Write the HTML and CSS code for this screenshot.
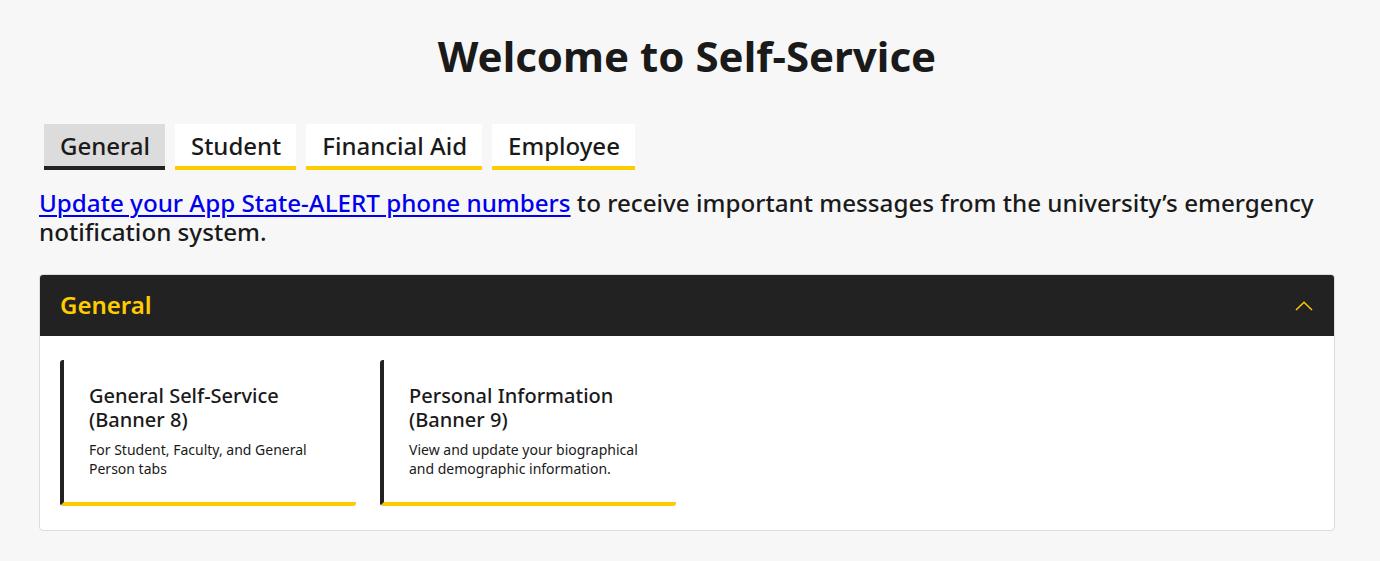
FILE: index.html
```html
<!DOCTYPE html>
<html lang="en">
<head>
<meta charset="utf-8">
<title>Welcome to Self-Service</title>
<link rel="stylesheet" href="styles.css">
</head>
<body>
<main class="page">
  <h1 class="title">Welcome to Self-Service</h1>
  <nav class="tabs">
    <a class="tab tab-active" href="#">General</a>
    <a class="tab" href="#">Student</a>
    <a class="tab" href="#">Financial Aid</a>
    <a class="tab" href="#">Employee</a>
  </nav>
  <p class="notice"><a href="#" class="notice-link">Update your App State-ALERT phone numbers</a> to receive important messages from the university’s emergency notification system.</p>
  <section class="panel">
    <header class="panel-head">
      <h2 class="panel-title">General</h2>
      <svg class="chevron" width="18" height="10" viewBox="0 0 18 10" aria-hidden="true"><path d="M1 9 L9 1.2 L17 9" fill="none" stroke="#ffcc00" stroke-width="1.5"/></svg>
    </header>
    <div class="panel-body">
      <a class="card" href="#">
        <h3 class="card-title">General Self-Service (Banner 8)</h3>
        <p class="card-desc">For Student, Faculty, and General Person tabs</p>
      </a>
      <a class="card" href="#">
        <h3 class="card-title">Personal Information (Banner 9)</h3>
        <p class="card-desc">View and update your biographical and demographic information.</p>
      </a>
    </div>
  </section>
</main>
</body>
</html>
```
FILE: styles.css
```css
html, body {
  margin: 0;
  padding: 0;
  background: #f7f7f7;
  color: #1a1a1a;
  font-family: "Noto Sans", "Open Sans", sans-serif;
}
.page {
  width: 1296px;
  margin: 0 0 0 39px;
  padding-top: 28px;
}
.title {
  margin: 0;
  text-align: center;
  font-size: 42px;
  line-height: 56px;
  font-weight: 700;
  color: #1a1a1a;
}
.tabs {
  display: flex;
  gap: 10px;
  margin: 40px 0 0 5px;
}
.tab {
  display: block;
  background: #fff;
  color: #1a1a1a;
  text-decoration: none;
  font-size: 24px;
  font-weight: 500;
  line-height: 41px;
  padding: 1px 15px 0 16px;
  border-bottom: 4px solid #ffcc00;
}
.tab-active {
  background: #dcdcdc;
  border-bottom-color: #222;
}
.notice {
  margin: 18px 0 0 0;
  font-size: 24.2px;
  line-height: 29px;
  font-weight: 500;
  color: #1a1a1a;
}
.notice-link {
  color: #0000ee;
  text-decoration: underline;
  text-underline-offset: 3px;
  text-decoration-thickness: 2px;
}
.panel {
  margin-top: 28px;
  background: #fff;
  border: 1px solid #dcdcdc;
  border-radius: 4px;
}
.panel-head {
  display: flex;
  align-items: center;
  justify-content: space-between;
  background: #222;
  height: 61px;
  padding: 0 21px 0 20px;
  border-radius: 3px 3px 0 0;
}
.panel-title {
  margin: 0 0 3px 0;
  color: #ffcc00;
  font-size: 24px;
  font-weight: 600;
}
.chevron {
  display: block;
}
.panel-body {
  display: flex;
  gap: 24px;
  padding: 24px 20px 24px 20px;
}
.card {
  display: block;
  box-sizing: border-box;
  width: 296px;
  height: 146px;
  padding: 24px 27px 0 25px;
  background: #fff;
  color: #1a1a1a;
  text-decoration: none;
  border-left: 4px solid #222;
  border-bottom: 4px solid #ffcc00;
  border-radius: 3px;
}
.card-title {
  margin: 0;
  font-size: 20px;
  line-height: 24px;
  font-weight: 500;
}
.card-desc {
  margin: 8px 0 0 0;
  font-size: 14px;
  line-height: 19px;
  font-weight: 400;
}
```
